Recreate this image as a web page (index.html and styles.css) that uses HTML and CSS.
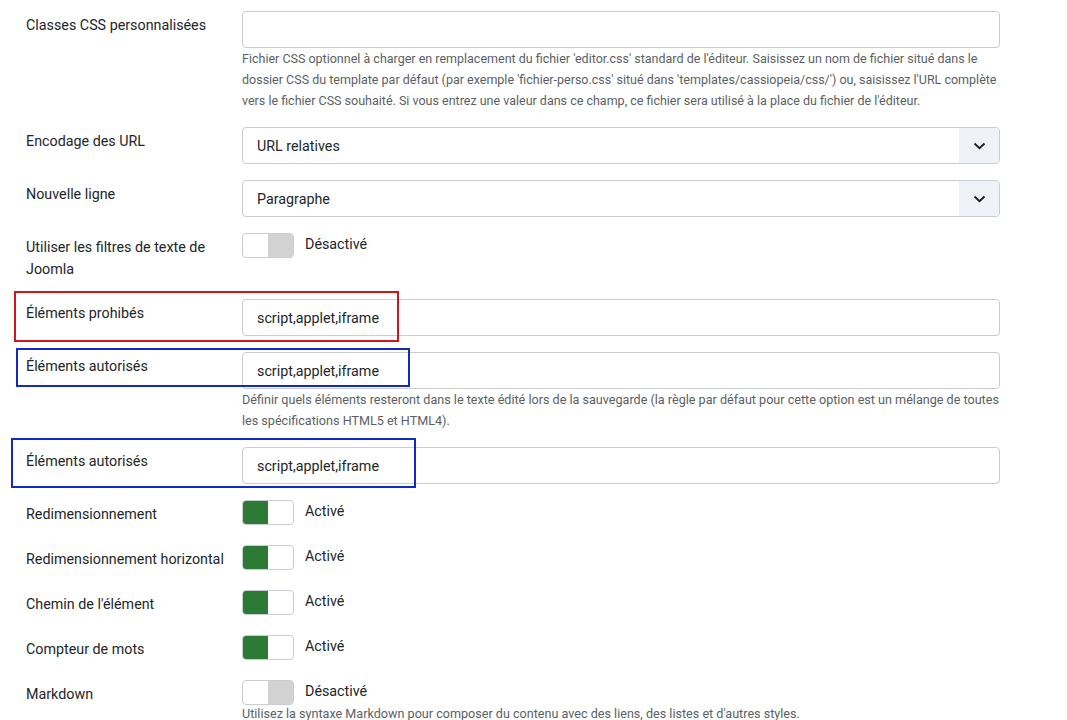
FILE: index.html
```html
<!DOCTYPE html>
<html lang="fr">
<head>
<meta charset="utf-8">
<title>Options</title>
<link rel="stylesheet" href="styles.css">
</head>
<body>
<div class="form">
  <div class="row">
    <label class="lbl">Classes CSS personnalisées</label>
    <div class="ctl">
      <div class="input"></div>
      <div class="help nowrap">Fichier CSS optionnel à charger en remplacement du fichier 'editor.css' standard de l'éditeur. Saisissez un nom de fichier situé dans le<br>dossier CSS du template par défaut (par exemple 'fichier-perso.css' situé dans 'templates/cassiopeia/css/') ou, saisissez l'URL complète<br>vers le fichier CSS souhaité. Si vous entrez une valeur dans ce champ, ce fichier sera utilisé à la place du fichier de l'éditeur.</div>
    </div>
  </div>

  <div class="row">
    <label class="lbl">Encodage des URL</label>
    <div class="ctl">
      <div class="input select"><span class="val">URL relatives</span><span class="caret"><svg width="13" height="8" viewBox="0 0 13 8"><polyline points="1.5,1.5 6.5,6.2 11.5,1.5" fill="none" stroke="#1c1f23" stroke-width="1.9"/></svg></span></div>
    </div>
  </div>

  <div class="row">
    <label class="lbl">Nouvelle ligne</label>
    <div class="ctl">
      <div class="input select"><span class="val">Paragraphe</span><span class="caret"><svg width="13" height="8" viewBox="0 0 13 8"><polyline points="1.5,1.5 6.5,6.2 11.5,1.5" fill="none" stroke="#1c1f23" stroke-width="1.9"/></svg></span></div>
    </div>
  </div>

  <div class="row trow">
    <label class="lbl">Utiliser les filtres de texte de Joomla</label>
    <div class="ctl">
      <div class="swline"><span class="switch off"><span class="half"></span><span class="half"></span></span><span class="swtext">Désactivé</span></div>
    </div>
  </div>

  <div class="row">
    <span class="mark red"></span>
    <label class="lbl">Éléments prohibés</label>
    <div class="ctl">
      <div class="input"><span class="val">script,applet,iframe</span></div>
    </div>
  </div>

  <div class="row">
    <span class="mark blue1"></span>
    <label class="lbl">Éléments autorisés</label>
    <div class="ctl">
      <div class="input"><span class="val">script,applet,iframe</span></div>
      <div class="help">Définir quels éléments resteront dans le texte édité lors de la sauvegarde (la règle par défaut pour cette option est un mélange de toutes les spécifications HTML5 et HTML4).</div>
    </div>
  </div>

  <div class="row">
    <span class="mark blue2"></span>
    <label class="lbl">Éléments autorisés</label>
    <div class="ctl">
      <div class="input"><span class="val">script,applet,iframe</span></div>
    </div>
  </div>

  <div class="row trow">
    <label class="lbl">Redimensionnement</label>
    <div class="ctl">
      <div class="swline"><span class="switch on"><span class="half"></span><span class="half"></span></span><span class="swtext">Activé</span></div>
    </div>
  </div>

  <div class="row trow">
    <label class="lbl">Redimensionnement horizontal</label>
    <div class="ctl">
      <div class="swline"><span class="switch on"><span class="half"></span><span class="half"></span></span><span class="swtext">Activé</span></div>
    </div>
  </div>

  <div class="row trow">
    <label class="lbl">Chemin de l'élément</label>
    <div class="ctl">
      <div class="swline"><span class="switch on"><span class="half"></span><span class="half"></span></span><span class="swtext">Activé</span></div>
    </div>
  </div>

  <div class="row trow">
    <label class="lbl">Compteur de mots</label>
    <div class="ctl">
      <div class="swline"><span class="switch on"><span class="half"></span><span class="half"></span></span><span class="swtext">Activé</span></div>
    </div>
  </div>

  <div class="row">
    <label class="lbl">Markdown</label>
    <div class="ctl">
      <div class="swline"><span class="switch off"><span class="half"></span><span class="half"></span></span><span class="swtext">Désactivé</span></div>
      <div class="help tight">Utilisez la syntaxe Markdown pour composer du contenu avec des liens, des listes et d'autres styles.</div>
    </div>
  </div>
</div>
</body>
</html>
```

FILE: styles.css
```css
html, body {
  margin: 0;
  padding: 0;
  background: #ffffff;
}

body {
  font-family: Roboto, "Liberation Sans", Arial, sans-serif;
  color: #22262a;
  font-size: 14.3px;
}

.form {
  padding: 11px 0 0 26px;
}

.row {
  position: relative;
  display: grid;
  grid-template-columns: 216px 758px;
  align-items: start;
  margin-bottom: 16px;
}

.trow {
  min-height: 29px;
}

.lbl {
  display: block;
  padding: 3px 10px 3px 0;
  line-height: 22px;
  font-size: 14.3px;
  color: #22262a;
}

.ctl {
  display: flex;
  flex-direction: column;
}

.input {
  box-sizing: border-box;
  height: 37px;
  border: 1px solid #c9cdd2;
  border-radius: 4px;
  background: #fff;
  display: flex;
  align-items: center;
  padding-left: 14px;
  font-size: 14.3px;
  color: #22262a;
  overflow: hidden;
}

.select {
  padding-right: 0;
}

.select .val {
  flex: 1;
}

.caret {
  width: 40px;
  align-self: stretch;
  background: #eff3f9;
  display: flex;
  align-items: center;
  justify-content: center;
}

.help {
  font-size: 12.6px;
  line-height: 21px;
  color: #5a5f64;
}

.help.nowrap {
  white-space: nowrap;
  font-size: 12.5px;
}

.help.tight {
  margin-top: -2px;
}

.swline {
  display: flex;
  align-items: center;
  height: 25px;
}

.switch {
  box-sizing: border-box;
  width: 52px;
  height: 25px;
  border: 1px solid #c9cdd2;
  border-radius: 4px;
  display: flex;
  overflow: hidden;
  background: #fff;
}

.switch .half {
  flex: 1;
}

.switch.off .half:last-child {
  background: #d2d2d2;
}

.switch.on .half:first-child {
  background: #2d7a37;
}

.swtext {
  margin-left: 11px;
  margin-top: -3px;
  font-size: 14.3px;
  color: #22262a;
}

.mark {
  position: absolute;
  box-sizing: border-box;
  border-width: 2px;
  border-style: solid;
  pointer-events: none;
}

.mark.red {
  border-color: #d2141c;
  left: -12px;
  top: -8px;
  width: 385px;
  height: 51px;
}

.mark.blue1 {
  border-color: #1428c8;
  left: -10px;
  top: -4px;
  width: 394px;
  height: 39px;
}

.mark.blue2 {
  border-color: #1428c8;
  left: -15px;
  top: -9px;
  width: 405px;
  height: 50px;
}
```
